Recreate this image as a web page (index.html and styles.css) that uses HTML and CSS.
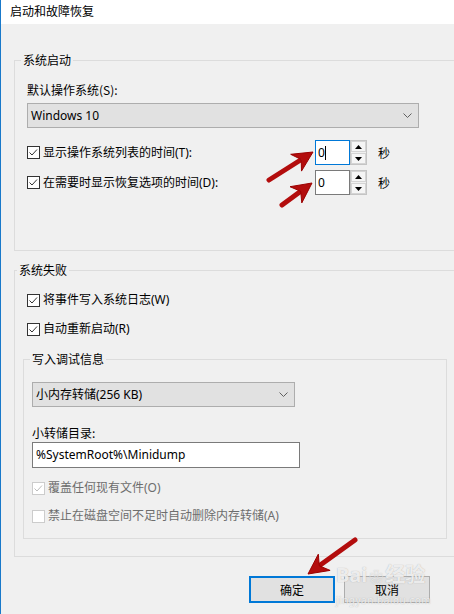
FILE: index.html
```html
<!DOCTYPE html>
<html lang="zh-CN">
<head>
    <meta charset="UTF-8">
    <title>启动和故障恢复</title>
    <link rel="stylesheet" href="styles.css">
</head>
<body>
    <div class="window">
        <div class="titlebar">启动和故障恢复</div>

        <div class="dialog">
            <fieldset class="group group-startup">
                <legend>系统启动</legend>
                <div class="field-label label-os">默认操作系统(S):</div>
                <div class="combo combo-os">
                    <span>Windows 10</span>
                    <svg class="chevron" viewBox="0 0 9 5"><path d="M0.5 0.5l4 4 4-4"/></svg>
                </div>

                <div class="timer-row timer-first">
                    <label class="check">
                        <svg class="box" viewBox="0 0 13 13"><rect x="0.5" y="0.5" width="12" height="12"/><path d="M2.5 6.5l2.5 2.5 5-5.5"/></svg>
                        显示操作系统列表的时间(T):
                    </label>
                    <div class="spin">
                        <span class="spin-value focused">0<i class="caret"></i></span>
                        <span class="spin-btns">
                            <span class="spin-btn"><svg viewBox="0 0 7 4"><path d="M3.5 0L7 4H0z"/></svg></span>
                            <span class="spin-btn"><svg viewBox="0 0 7 4"><path d="M0 0h7L3.5 4z"/></svg></span>
                        </span>
                    </div>
                    <span class="unit">秒</span>
                </div>

                <div class="timer-row">
                    <label class="check">
                        <svg class="box" viewBox="0 0 13 13"><rect x="0.5" y="0.5" width="12" height="12"/><path d="M2.5 6.5l2.5 2.5 5-5.5"/></svg>
                        在需要时显示恢复选项的时间(D):
                    </label>
                    <div class="spin">
                        <span class="spin-value">0</span>
                        <span class="spin-btns">
                            <span class="spin-btn"><svg viewBox="0 0 7 4"><path d="M3.5 0L7 4H0z"/></svg></span>
                            <span class="spin-btn"><svg viewBox="0 0 7 4"><path d="M0 0h7L3.5 4z"/></svg></span>
                        </span>
                    </div>
                    <span class="unit">秒</span>
                </div>
            </fieldset>

            <fieldset class="group group-failure">
                <legend>系统失败</legend>
                <label class="check check-log">
                    <svg class="box" viewBox="0 0 13 13"><rect x="0.5" y="0.5" width="12" height="12"/><path d="M2.5 6.5l2.5 2.5 5-5.5"/></svg>
                    将事件写入系统日志(W)
                </label>
                <label class="check check-restart">
                    <svg class="box" viewBox="0 0 13 13"><rect x="0.5" y="0.5" width="12" height="12"/><path d="M2.5 6.5l2.5 2.5 5-5.5"/></svg>
                    自动重新启动(R)
                </label>

                <fieldset class="group group-debug">
                    <legend>写入调试信息</legend>
                    <div class="combo combo-dump">
                        <span>小内存转储(256 KB)</span>
                        <svg class="chevron" viewBox="0 0 9 5"><path d="M0.5 0.5l4 4 4-4"/></svg>
                    </div>
                    <div class="field-label label-dir">小转储目录:</div>
                    <div class="textbox">%SystemRoot%\Minidump</div>
                    <label class="check disabled check-overwrite">
                        <svg class="box" viewBox="0 0 13 13"><rect x="0.5" y="0.5" width="12" height="12"/><path d="M2.5 6.5l2.5 2.5 5-5.5"/></svg>
                        覆盖任何现有文件(O)
                    </label>
                    <label class="check disabled check-lowdisk">
                        <svg class="box" viewBox="0 0 13 13"><rect x="0.5" y="0.5" width="12" height="12"/></svg>
                        禁止在磁盘空间不足时自动删除内存转储(A)
                    </label>
                </fieldset>
            </fieldset>

            <div class="buttons">
                <button class="btn btn-default">确定</button>
                <button class="btn">取消</button>
            </div>
        </div>
    </div>

    <!-- 标注箭头 -->
    <svg class="arrows" viewBox="0 0 454 614">
        <g class="arrow">
            <line x1="269" y1="180" x2="299" y2="161"/>
            <polygon points="313,152 290.7,154.3 301.2,159.5 301.5,171.1"/>
        </g>
        <g class="arrow">
            <line x1="282" y1="205" x2="299" y2="192.5"/>
            <polygon points="312,183 290,186.7 300.7,191.3 301.8,202.9"/>
        </g>
        <g class="arrow">
            <line x1="355" y1="540" x2="321" y2="564.5"/>
            <polygon points="308,574 330.1,570.4 319.3,565.8 318.3,554.2"/>
        </g>
    </svg>

    <div class="watermark">
        <span class="wm-logo">Bai<span class="wm-paw">❀</span>经验</span>
        <span class="wm-url">jingyan.baidu.com</span>
    </div>
</body>
</html>
```

FILE: styles.css
```css
body {
    margin: 0;
    width: 454px;
    height: 614px;
    overflow: hidden;
    position: relative;
    background: #f0f0f0;
    font-family: "Noto Sans", "Noto Sans CJK SC", sans-serif;
    font-size: 12px;
    line-height: 16px;
    color: #000;
}
.window {
    height: 614px;
    border-left: 1px solid #1979ca;
    box-sizing: border-box;
}
.titlebar {
    height: 24px;
    line-height: 22px;
    padding-left: 9px;
    background: #fff;
    font-family: "Noto Sans CJK SC", sans-serif;
}
.dialog {
    padding: 28px 0 0 13px;
}

/* 分组框 */
.group {
    margin: 0 -60px 0 0;
    border: 1px solid #dcdcdc;
    min-width: 0;
}
.group legend {
    padding: 0 2px;
    margin-left: -6px;
    line-height: 16px;
    font-family: "Noto Sans CJK SC", sans-serif;
}
.group-startup {
    padding: 0 0 55px 12px;
}
.group-failure {
    margin-top: 11px;
    padding: 0 0 17px 8px;
}
.group-debug {
    margin: 14px 0 0 0;
    width: 424px;
    box-sizing: border-box;
    padding: 0 0 14px 8px;
}
.group-debug legend {
    margin-left: -2px;
}

.field-label {
    font-family: "Noto Sans CJK SC", sans-serif;
}
.label-os {
    margin-top: 14px;
}
.label-dir {
    margin-top: 18px;
}

/* 下拉框 */
.combo {
    display: flex;
    align-items: center;
    justify-content: space-between;
    height: 25px;
    box-sizing: border-box;
    background: #e1e1e1;
    border: 1px solid #adadad;
    padding: 0 6px 0 3px;
}
.combo-os {
    width: 392px;
    margin-top: 5px;
}
.combo-dump {
    width: 263px;
    margin-top: 15px;
}
.chevron {
    width: 9px;
    height: 5px;
    fill: none;
    stroke: #606060;
    stroke-width: 1;
}

/* 复选框 */
.check {
    display: flex;
    align-items: center;
    gap: 3px;
    height: 16px;
    white-space: nowrap;
}
.box {
    width: 13px;
    height: 13px;
    flex: none;
}
.box rect {
    fill: #fff;
    stroke: #333;
}
.box path {
    fill: none;
    stroke: #333;
    stroke-width: 1;
}
.check.disabled {
    color: #6d6d6d;
}
.check.disabled .box rect {
    stroke: #ccc;
}
.check.disabled .box path {
    stroke: #bcbcbc;
}
.check-log {
    margin: 14px 0 0 4px;
}
.check-restart {
    margin: 13px 0 0 4px;
}
.check-overwrite {
    margin-top: 12px;
}
.check-lowdisk {
    margin-top: 12px;
}

/* 时间设置 */
.timer-row {
    display: grid;
    grid-template-columns: 288px 52px auto;
    column-gap: 0;
    align-items: center;
    height: 25px;
    margin-top: 5px;
}
.timer-first {
    margin-top: 12px;
}
.spin {
    display: flex;
    height: 25px;
}
.spin-value {
    display: flex;
    align-items: center;
    width: 35px;
    box-sizing: border-box;
    background: #fff;
    border: 1px solid #7a7a7a;
    padding-left: 2px;
}
.spin-value.focused {
    border-color: #0078d7;
}
.caret {
    width: 1px;
    height: 14px;
    background: #000;
}
.spin-btns {
    display: flex;
    flex-direction: column;
    gap: 1px;
    width: 17px;
    box-sizing: border-box;
    border: 1px solid #c4c4c4;
    background: #f0f0f0;
}
.spin-btn {
    flex: 1;
    display: flex;
    align-items: center;
    justify-content: center;
    border: 1px solid #d4d4d4;
    background: #f5f5f5;
}
.spin-btn svg {
    width: 7px;
    height: 4px;
    fill: #000;
}
.unit {
    margin-left: 11px;
    font-family: "Noto Sans CJK SC", sans-serif;
}

/* 文本框 */
.textbox {
    width: 268px;
    height: 26px;
    box-sizing: border-box;
    margin-top: 1px;
    background: #fff;
    border: 1px solid #7a7a7a;
    padding-left: 3px;
    line-height: 24px;
}

/* 按钮 */
.buttons {
    display: flex;
    justify-content: flex-end;
    gap: 9px;
    margin-top: 19px;
    padding-right: 24px;
}
.btn {
    width: 86px;
    height: 27px;
    margin: 0;
    background: #e1e1e1;
    border: 1px solid #adadad;
    font-family: "Noto Sans CJK SC", sans-serif;
    font-size: 12px;
    color: #000;
    padding: 0;
}
.btn-default {
    border: 2px solid #0078d7;
}

/* 箭头标注 */
.arrows {
    position: absolute;
    top: 0;
    left: 0;
    width: 454px;
    height: 614px;
    pointer-events: none;
}
.arrow line {
    stroke: #b30d0d;
    stroke-width: 5;
    stroke-linecap: round;
}
.arrow polygon {
    fill: #b30d0d;
    stroke: #9a0000;
    stroke-width: 1;
    stroke-linejoin: round;
}

/* 水印 */
.watermark {
    position: absolute;
    left: 336px;
    top: 563px;
    display: flex;
    flex-direction: column;
    color: rgba(255, 255, 255, 0.8);
    text-shadow: 0 0 1px rgba(120, 120, 120, 0.6);
    pointer-events: none;
}
.wm-logo {
    font-family: "Noto Sans", "Noto Sans CJK SC", sans-serif;
    font-size: 20px;
    font-weight: bold;
    line-height: 24px;
}
.wm-paw {
    font-size: 14px;
    margin: 0 2px;
}
.wm-url {
    margin-top: 6px;
    font-size: 10px;
    line-height: 10px;
    letter-spacing: 0.5px;
}
```
